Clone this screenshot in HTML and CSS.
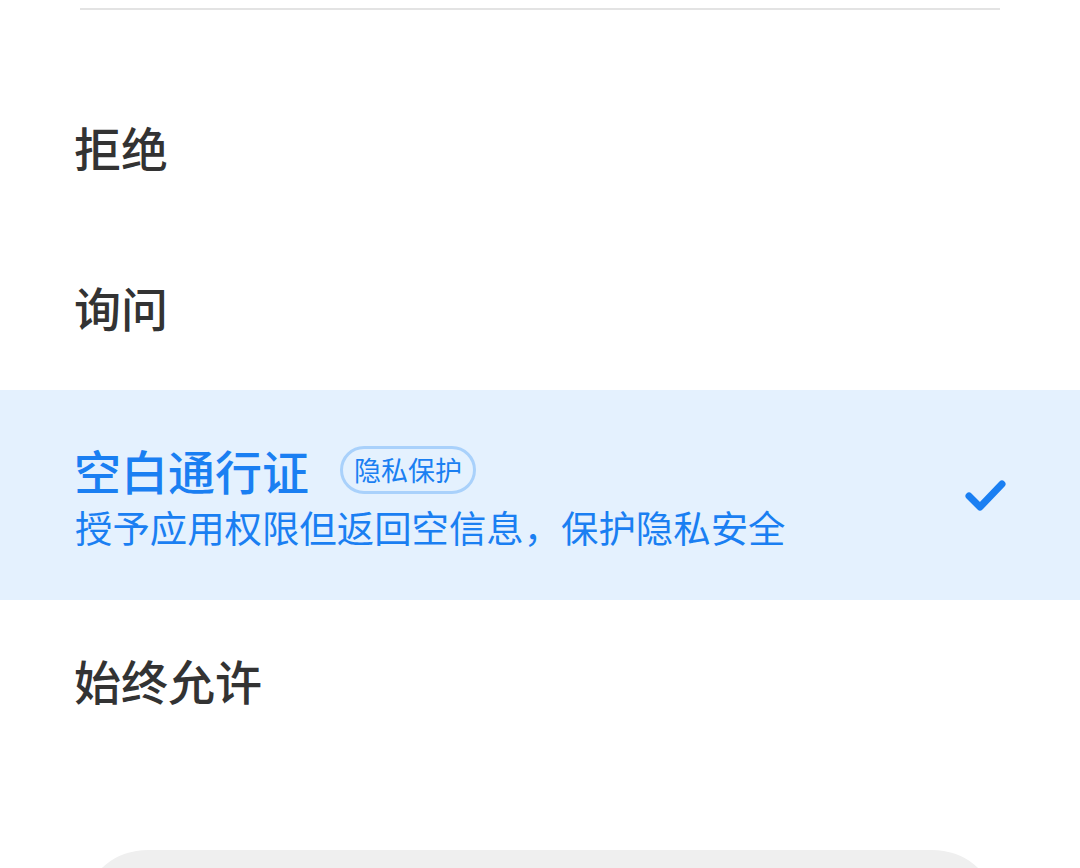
FILE: index.html
```html
<!DOCTYPE html>
<html lang="zh-CN">
<head>
<meta charset="utf-8">
<link rel="stylesheet" href="styles.css">
</head>
<body>
<div class="page">
  <div class="divider"></div>
  <div class="list">
    <div class="item"><span class="label">拒绝</span></div>
    <div class="item"><span class="label">询问</span></div>
    <div class="item selected">
      <div class="text">
        <div class="title-row">
          <span class="title">空白通行证</span>
          <span class="badge">隐私保护</span>
        </div>
        <div class="desc">授予应用权限但返回空信息，保护隐私安全</div>
      </div>
      <svg class="check" width="44" height="36" viewBox="0 0 44 36">
        <path d="M5 18 L16 29 L38 6" fill="none" stroke="#1a7ff2" stroke-width="7" stroke-linecap="round" stroke-linejoin="round"/>
      </svg>
    </div>
    <div class="item tall"><span class="label">始终允许</span></div>
  </div>
  <div class="bottom-btn"></div>
</div>
</body>
</html>
```
FILE: styles.css
```css
html, body {
  margin: 0;
  padding: 0;
  background: #ffffff;
}
body {
  font-family: "Noto Sans CJK SC", "Noto Sans", sans-serif;
  width: 1080px;
  height: 868px;
  overflow: hidden;
}
.page {
  display: flex;
  flex-direction: column;
}
.page > *, .list > * {
  flex-shrink: 0;
}
.divider {
  margin: 8px 80px 0 80px;
  height: 2px;
  background: #e3e3e3;
}
.list {
  margin-top: 60px;
  display: flex;
  flex-direction: column;
}
.item {
  height: 160px;
  display: flex;
  align-items: center;
  padding: 0 72px 0 74px;
}
.item.tall {
  height: 166px;
}
.label {
  font-size: 47px;
  line-height: 1;
  font-weight: 500;
  color: #333333;
  transform: translateY(-4px);
}
.item.selected {
  height: 210px;
  background: #e4f1fe;
  justify-content: space-between;
}
.text {
  display: flex;
  flex-direction: column;
  gap: 12px;
  margin-top: 4px;
}
.title-row {
  display: flex;
  align-items: center;
  gap: 31px;
}
.title {
  font-size: 47px;
  line-height: 48px;
  font-weight: 500;
  color: #1a7ff2;
}
.badge {
  font-size: 27px;
  line-height: 1;
  color: #1a7ff2;
  border: 3px solid #a9d1fb;
  border-radius: 24px;
  padding: 7px 11px 8px 11px;
}
.desc {
  font-size: 37.4px;
  line-height: 42px;
  color: #1a7ff2;
  margin-left: 1px;
}
.check {
  display: block;
  margin-top: 2px;
}
.bottom-btn {
  margin: 84px 88px 0 88px;
  height: 120px;
  background: #efefef;
  border-radius: 60px 60px 0 0 / 50px 50px 0 0;
}
```
